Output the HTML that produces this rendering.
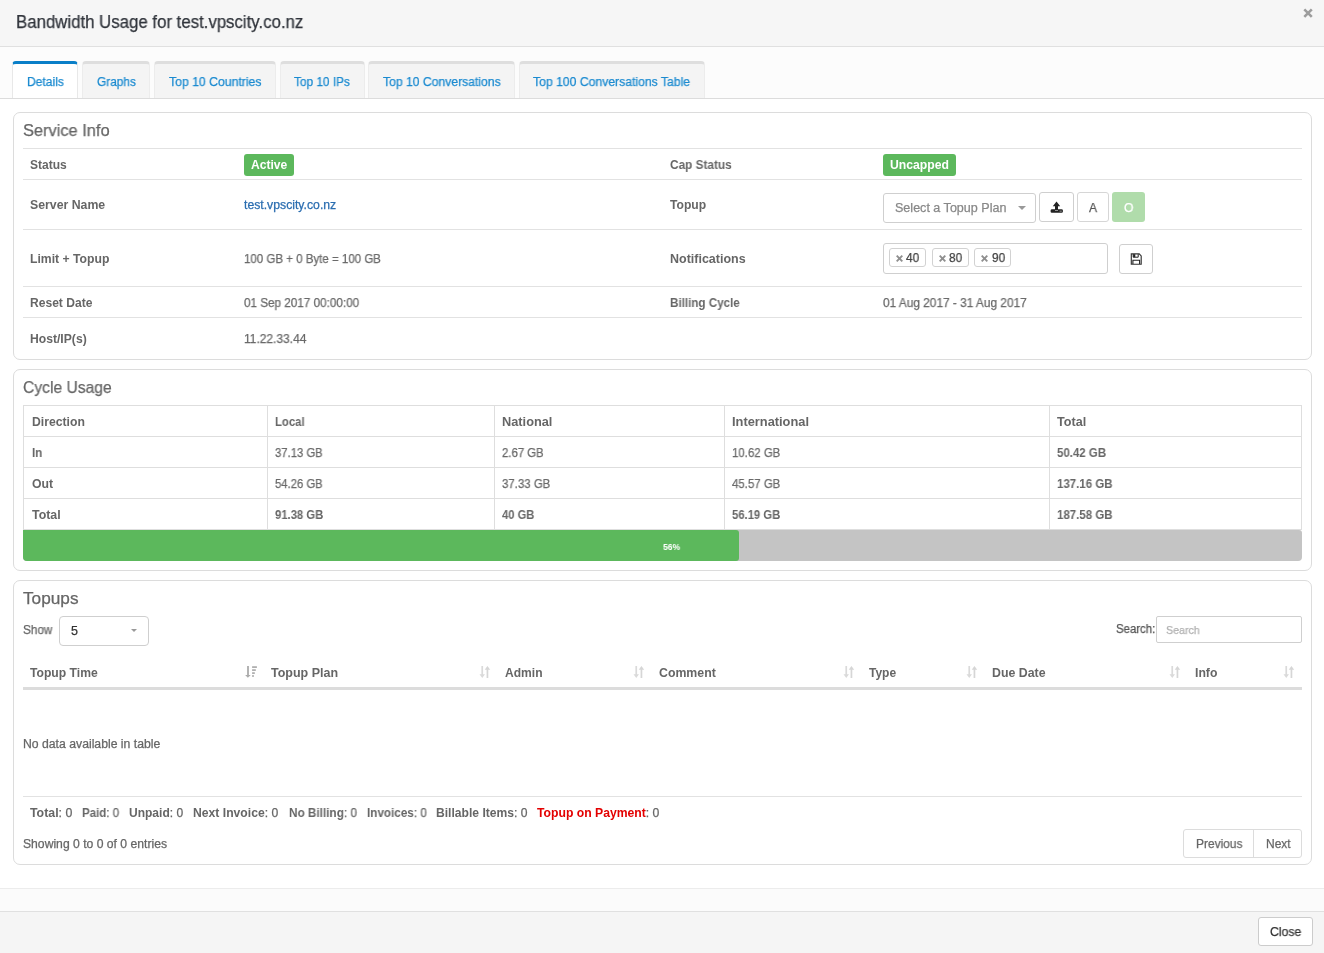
<!DOCTYPE html>
<html><head><meta charset="utf-8"><title>Bandwidth Usage</title>
<style>
html,body{margin:0;padding:0;width:1324px;height:953px;overflow:hidden;background:#fff;font-family:"Liberation Sans", sans-serif;}
body>div,body>svg{position:absolute;}
.t{white-space:nowrap;line-height:1;transform-origin:0 0;will-change:transform;}
.n{-webkit-text-stroke:0.25px currentColor;}
b{font-weight:700;-webkit-text-stroke:0;}
</style></head><body>
<div style="left:0px;top:0px;width:1324px;height:46px;background:#f6f6f6"></div>
<div style="left:0px;top:46px;width:1324px;height:1px;background:#e0e0e0"></div>
<div class="t n" style="left:15.7px;top:14.00px;font-size:17.5px;font-weight:400;color:#30343b;transform:scaleX(0.9600);">Bandwidth Usage for test.vpscity.co.nz</div>
<svg style="left:1302.1px;top:7.1px" width="12" height="12" viewBox="0 0 12 12"><path d="M2.3 2.3L9.8 9.8M9.8 2.3L2.3 9.8" stroke="#9d9d9d" stroke-width="2.6"/></svg>
<div style="left:0px;top:47px;width:1324px;height:51px;background:#fcfcfc"></div>
<div style="left:0px;top:98px;width:1324px;height:1px;background:#dcdcdc"></div>
<div style="left:12px;top:61px;width:66px;height:37px;background:#fff;border:1px solid #e8e8e8;border-bottom:none;border-top:3px solid #0a7fc8;border-radius:4px 4px 0 0;box-sizing:border-box"></div>
<div class="t n" style="left:26.6px;top:76.00px;font-size:12.5px;font-weight:400;color:#1a8ad0;transform:scaleX(0.9629);">Details</div>
<div style="left:82px;top:61px;width:68px;height:37px;background:#f4f4f4;border:1px solid #ececec;border-bottom:none;border-top:3px solid #dedede;border-radius:4px 4px 0 0;box-sizing:border-box"></div>
<div class="t n" style="left:96.7px;top:76.00px;font-size:12.5px;font-weight:400;color:#1a8ad0;transform:scaleX(0.9488);">Graphs</div>
<div style="left:154px;top:61px;width:122px;height:37px;background:#f4f4f4;border:1px solid #ececec;border-bottom:none;border-top:3px solid #dedede;border-radius:4px 4px 0 0;box-sizing:border-box"></div>
<div class="t n" style="left:168.5px;top:76.00px;font-size:12.5px;font-weight:400;color:#1a8ad0;transform:scaleX(0.9787);">Top 10 Countries</div>
<div style="left:280px;top:61px;width:85px;height:37px;background:#f4f4f4;border:1px solid #ececec;border-bottom:none;border-top:3px solid #dedede;border-radius:4px 4px 0 0;box-sizing:border-box"></div>
<div class="t n" style="left:294px;top:76.00px;font-size:12.5px;font-weight:400;color:#1a8ad0;transform:scaleX(0.9462);">Top 10 IPs</div>
<div style="left:368px;top:61px;width:147px;height:37px;background:#f4f4f4;border:1px solid #ececec;border-bottom:none;border-top:3px solid #dedede;border-radius:4px 4px 0 0;box-sizing:border-box"></div>
<div class="t n" style="left:382.6px;top:76.00px;font-size:12.5px;font-weight:400;color:#1a8ad0;transform:scaleX(0.9727);">Top 10 Conversations</div>
<div style="left:519px;top:61px;width:186px;height:37px;background:#f4f4f4;border:1px solid #ececec;border-bottom:none;border-top:3px solid #dedede;border-radius:4px 4px 0 0;box-sizing:border-box"></div>
<div class="t n" style="left:533.4px;top:76.00px;font-size:12.5px;font-weight:400;color:#1a8ad0;transform:scaleX(0.9758);">Top 100 Conversations Table</div>
<div style="left:0px;top:99px;width:1324px;height:789px;background:#fff"></div>
<div style="left:13px;top:112px;width:1299px;height:248px;border:1px solid #dcdcdc;border-radius:7px;box-sizing:border-box"></div>
<div class="t n" style="left:23.1px;top:123.00px;font-size:16.6px;font-weight:400;color:#666;transform:scaleX(0.9883);">Service Info</div>
<div style="left:23px;top:148px;width:1279px;height:1px;background:#e2e2e2"></div>
<div style="left:23px;top:179px;width:1279px;height:1px;background:#e2e2e2"></div>
<div style="left:23px;top:229px;width:1279px;height:1px;background:#e2e2e2"></div>
<div style="left:23px;top:286px;width:1279px;height:1px;background:#e2e2e2"></div>
<div style="left:23px;top:317px;width:1279px;height:1px;background:#e2e2e2"></div>
<div class="t" style="left:30px;top:159.00px;font-size:12px;font-weight:700;color:#666;transform:scaleX(1.0031);">Status</div>
<div style="left:244px;top:154px;width:50px;height:22px;background:#5cb85c;border-radius:3px"></div>
<div class="t" style="left:250.5px;top:159.00px;font-size:12px;font-weight:700;color:#fff;transform:scaleX(1.0047);">Active</div>
<div class="t" style="left:670px;top:159.00px;font-size:12px;font-weight:700;color:#666;transform:scaleX(0.9842);">Cap Status</div>
<div style="left:883px;top:154px;width:73px;height:22px;background:#5cb85c;border-radius:3px"></div>
<div class="t" style="left:889.6px;top:159.00px;font-size:12px;font-weight:700;color:#fff;transform:scaleX(1.0170);">Uncapped</div>
<div class="t" style="left:30px;top:199.00px;font-size:12px;font-weight:700;color:#666;transform:scaleX(1.0247);">Server Name</div>
<div class="t n" style="left:243.8px;top:199.00px;font-size:12px;font-weight:400;color:#2a6db0;transform:scaleX(1.0190);">test.vpscity.co.nz</div>
<div class="t" style="left:670px;top:199.00px;font-size:12px;font-weight:700;color:#666;transform:scaleX(1.0093);">Topup</div>
<div style="left:883px;top:193px;width:153px;height:30px;border:1px solid #cfcfcf;border-radius:3px;box-sizing:border-box;background:#fff"></div>
<div class="t n" style="left:894.7px;top:202.00px;font-size:12.5px;font-weight:400;color:#888;transform:scaleX(1.0039);">Select a Topup Plan</div>
<div style="left:1018px;top:206px;width:0;height:0;border-left:4px solid transparent;border-right:4px solid transparent;border-top:4px solid #999"></div>
<div style="left:1039px;top:192px;width:35px;height:30px;border:1px solid #cfcfcf;border-radius:3px;box-sizing:border-box;background:#fff"></div>
<svg style="left:1049px;top:200px" width="15" height="14" viewBox="0 0 15 14"><path d="M7.5 1.5L3.8 6.3H6V10H9V6.3H11.2Z" fill="#222"/><path d="M2.6 9.2H6V10.6H9V9.2H12.6A1.3 1.3 0 0 1 13.9 10.5V11.6A1.2 1.2 0 0 1 12.7 12.8H2.8A1.2 1.2 0 0 1 1.6 11.6V10.4A1.2 1.2 0 0 1 2.6 9.2Z" fill="#222"/><rect x="10.6" y="10.6" width="2.2" height="1.1" fill="#888"/></svg>
<div style="left:1077px;top:192px;width:32px;height:30px;border:1px solid #d6d6d6;border-radius:3px;box-sizing:border-box;background:#fff"></div>
<div class="t n" style="left:1089px;top:202.00px;font-size:12.5px;font-weight:400;color:#555;transform:scaleX(0.9588);">A</div>
<div style="left:1112px;top:192px;width:33px;height:30px;border-radius:3px;background:#b0dcab"></div>
<div class="t n" style="left:1123.8px;top:202.00px;font-size:12.5px;font-weight:400;color:#fff;transform:scaleX(0.9657);">O</div>
<div class="t" style="left:30.1px;top:253.00px;font-size:12px;font-weight:700;color:#666;transform:scaleX(1.0165);">Limit + Topup</div>
<div class="t n" style="left:244.4px;top:253.00px;font-size:12.2px;font-weight:400;color:#6a6a6a;transform:scaleX(0.9441);">100 GB + 0 Byte = 100 GB</div>
<div class="t" style="left:669.9px;top:253.00px;font-size:12px;font-weight:700;color:#666;transform:scaleX(1.0403);">Notifications</div>
<div style="left:883px;top:243px;width:225px;height:31px;border:1px solid #cfcfcf;border-radius:3px;box-sizing:border-box;background:#fff"></div>
<div style="left:889px;top:248px;width:37px;height:19px;border:1px solid #d2d2d2;border-radius:3px;box-sizing:border-box;background:#fff"></div>
<svg style="left:895.5px;top:255px" width="7" height="7" viewBox="0 0 7 7"><path d="M0.7 0.7L6.3 6.3M6.3 0.7L0.7 6.3" stroke="#8f8f8f" stroke-width="1.9"/></svg>
<div class="t n" style="left:906.2px;top:252.00px;font-size:12px;font-weight:400;color:#444;transform:scaleX(0.9806);">40</div>
<div style="left:932px;top:248px;width:37px;height:19px;border:1px solid #d2d2d2;border-radius:3px;box-sizing:border-box;background:#fff"></div>
<svg style="left:938.5px;top:255px" width="7" height="7" viewBox="0 0 7 7"><path d="M0.7 0.7L6.3 6.3M6.3 0.7L0.7 6.3" stroke="#8f8f8f" stroke-width="1.9"/></svg>
<div class="t n" style="left:949.2px;top:252.00px;font-size:12px;font-weight:400;color:#444;transform:scaleX(0.9806);">80</div>
<div style="left:974.3px;top:248px;width:37px;height:19px;border:1px solid #d2d2d2;border-radius:3px;box-sizing:border-box;background:#fff"></div>
<svg style="left:980.8px;top:255px" width="7" height="7" viewBox="0 0 7 7"><path d="M0.7 0.7L6.3 6.3M6.3 0.7L0.7 6.3" stroke="#8f8f8f" stroke-width="1.9"/></svg>
<div class="t n" style="left:991.5px;top:252.00px;font-size:12px;font-weight:400;color:#444;transform:scaleX(0.9806);">90</div>
<div style="left:1119px;top:244px;width:34px;height:30px;border:1px solid #cfcfcf;border-radius:3px;box-sizing:border-box;background:#fff"></div>
<svg style="left:1130px;top:252.5px" width="12" height="12" viewBox="0 0 12 12"><path d="M1.3 0.9H9.2L11.2 2.9V11.2H1.3Z" fill="none" stroke="#333" stroke-width="1.15"/><path d="M3.2 1.2V4.2H8.2V1.2" fill="none" stroke="#222" stroke-width="1"/><rect x="3.3" y="1.2" width="2" height="3" fill="#222"/><path d="M2.9 10.9V7.3H9.6V10.9" fill="none" stroke="#222" stroke-width="1.1"/></svg>
<div class="t" style="left:30.1px;top:297.00px;font-size:12px;font-weight:700;color:#666;transform:scaleX(1.0059);">Reset Date</div>
<div class="t n" style="left:243.9px;top:297.00px;font-size:12.2px;font-weight:400;color:#6a6a6a;transform:scaleX(0.9595);">01 Sep 2017 00:00:00</div>
<div class="t" style="left:670px;top:297.00px;font-size:12px;font-weight:700;color:#666;transform:scaleX(0.9690);">Billing Cycle</div>
<div class="t n" style="left:883px;top:297.00px;font-size:12.2px;font-weight:400;color:#6a6a6a;transform:scaleX(0.9726);">01 Aug 2017 - 31 Aug 2017</div>
<div class="t" style="left:30.1px;top:333.00px;font-size:12px;font-weight:700;color:#666;transform:scaleX(1.0122);">Host/IP(s)</div>
<div class="t n" style="left:244.4px;top:333.00px;font-size:12.2px;font-weight:400;color:#6a6a6a;transform:scaleX(0.9829);">11.22.33.44</div>
<div style="left:13px;top:369px;width:1299px;height:202px;border:1px solid #dcdcdc;border-radius:7px;box-sizing:border-box"></div>
<div class="t n" style="left:23.3px;top:379.00px;font-size:16.2px;font-weight:400;color:#666;transform:scaleX(0.9664);">Cycle Usage</div>
<div style="left:23px;top:405px;width:1279px;height:125px;border:1px solid #dedede;box-sizing:border-box"></div>
<div style="left:23px;top:436px;width:1279px;height:1px;background:#dedede"></div>
<div style="left:23px;top:467px;width:1279px;height:1px;background:#dedede"></div>
<div style="left:23px;top:498px;width:1279px;height:1px;background:#dedede"></div>
<div style="left:267px;top:405px;width:1px;height:125px;background:#dedede"></div>
<div style="left:494px;top:405px;width:1px;height:125px;background:#dedede"></div>
<div style="left:724px;top:405px;width:1px;height:125px;background:#dedede"></div>
<div style="left:1049px;top:405px;width:1px;height:125px;background:#dedede"></div>
<div class="t" style="left:31.5px;top:416.00px;font-size:12px;font-weight:700;color:#666;transform:scaleX(1.0170);">Direction</div>
<div class="t" style="left:275.3px;top:416.00px;font-size:12px;font-weight:700;color:#666;transform:scaleX(0.9444);">Local</div>
<div class="t" style="left:502.1px;top:416.00px;font-size:12px;font-weight:700;color:#666;transform:scaleX(1.0646);">National</div>
<div class="t" style="left:732.3px;top:416.00px;font-size:12px;font-weight:700;color:#666;transform:scaleX(1.0692);">International</div>
<div class="t" style="left:1056.9px;top:416.00px;font-size:12px;font-weight:700;color:#666;transform:scaleX(1.0511);">Total</div>
<div class="t" style="left:31.5px;top:447.00px;font-size:12px;font-weight:700;color:#666;transform:scaleX(0.9652);">In</div>
<div class="t n" style="left:275.3px;top:447.00px;font-size:12.2px;font-weight:400;color:#6a6a6a;transform:scaleX(0.9262);">37.13 GB</div>
<div class="t n" style="left:502.1px;top:447.00px;font-size:12.2px;font-weight:400;color:#6a6a6a;transform:scaleX(0.9325);">2.67 GB</div>
<div class="t n" style="left:732.3px;top:447.00px;font-size:12.2px;font-weight:400;color:#6a6a6a;transform:scaleX(0.9379);">10.62 GB</div>
<div class="t" style="left:1056.9px;top:447.00px;font-size:12px;font-weight:700;color:#666;transform:scaleX(0.9557);">50.42 GB</div>
<div class="t" style="left:31.5px;top:478.00px;font-size:12px;font-weight:700;color:#666;transform:scaleX(1.0207);">Out</div>
<div class="t n" style="left:275.3px;top:478.00px;font-size:12.2px;font-weight:400;color:#6a6a6a;transform:scaleX(0.9262);">54.26 GB</div>
<div class="t n" style="left:502.1px;top:478.00px;font-size:12.2px;font-weight:400;color:#6a6a6a;transform:scaleX(0.9379);">37.33 GB</div>
<div class="t n" style="left:732.3px;top:478.00px;font-size:12.2px;font-weight:400;color:#6a6a6a;transform:scaleX(0.9379);">45.57 GB</div>
<div class="t" style="left:1056.9px;top:478.00px;font-size:12px;font-weight:700;color:#666;transform:scaleX(0.9578);">137.16 GB</div>
<div class="t" style="left:31.5px;top:509.00px;font-size:12px;font-weight:700;color:#666;transform:scaleX(1.0331);">Total</div>
<div class="t" style="left:275.3px;top:509.00px;font-size:12px;font-weight:700;color:#666;transform:scaleX(0.9401);">91.38 GB</div>
<div class="t" style="left:502.1px;top:509.00px;font-size:12px;font-weight:700;color:#666;transform:scaleX(0.9312);">40 GB</div>
<div class="t" style="left:732.3px;top:509.00px;font-size:12px;font-weight:700;color:#666;transform:scaleX(0.9401);">56.19 GB</div>
<div class="t" style="left:1056.9px;top:509.00px;font-size:12px;font-weight:700;color:#666;transform:scaleX(0.9578);">187.58 GB</div>
<div style="left:23px;top:530px;width:1279px;height:31px;background:#c4c4c4;border-radius:0 3px 4px 4px"></div>
<div style="left:23px;top:530px;width:716px;height:31px;background:#5cb85c;border-radius:0 3px 3px 4px"></div>
<div class="t" style="left:662.7px;top:542.00px;font-size:9.5px;font-weight:700;color:#fff;transform:scaleX(0.9045);">56%</div>
<div style="left:13px;top:580px;width:1299px;height:285px;border:1px solid #dcdcdc;border-radius:7px;box-sizing:border-box"></div>
<div class="t n" style="left:23px;top:590.00px;font-size:17px;font-weight:400;color:#666;transform:scaleX(1.0123);">Topups</div>
<div class="t n" style="left:23px;top:624.00px;font-size:12px;font-weight:400;color:#666;transform:scaleX(0.9790);">Show</div>
<div style="left:59px;top:616px;width:90px;height:30px;border:1px solid #cfcfcf;border-radius:4px;box-sizing:border-box;background:#fff"></div>
<div class="t n" style="left:70.6px;top:625.00px;font-size:12.5px;font-weight:400;color:#333;">5</div>
<div style="left:131px;top:629px;width:0;height:0;border-left:3.5px solid transparent;border-right:3.5px solid transparent;border-top:3.5px solid #999"></div>
<div class="t n" style="left:1116.2px;top:623.00px;font-size:12px;font-weight:400;color:#555;transform:scaleX(0.9502);">Search:</div>
<div style="left:1156px;top:616px;width:146px;height:27px;border:1px solid #cfcfcf;border-radius:2px;box-sizing:border-box;background:#fff"></div>
<div class="t n" style="left:1166px;top:625.00px;font-size:11.5px;font-weight:400;color:#b0b0b0;transform:scaleX(0.9276);">Search</div>
<div class="t" style="left:30px;top:667.00px;font-size:12px;font-weight:700;color:#666;transform:scaleX(1.0121);">Topup Time</div>
<svg style="left:245px;top:666px" width="14" height="14" viewBox="0 0 14 14"><rect x="2.1" y="0" width="1.8" height="9.2" fill="#ababab"/><path d="M0.1 9H5.7L2.9 11.8Z" fill="#ababab"/><rect x="7.1" y="0.2" width="4.8" height="1.8" fill="#b0b0b0"/><rect x="7.1" y="3.2" width="3.7" height="1.8" fill="#b0b0b0"/><rect x="7.1" y="6.2" width="2.7" height="1.8" fill="#b0b0b0"/><rect x="7.1" y="9.1" width="1.8" height="1.8" fill="#b0b0b0"/></svg>
<div class="t" style="left:270.5px;top:667.00px;font-size:12px;font-weight:700;color:#666;transform:scaleX(1.0398);">Topup Plan</div>
<svg style="left:479.2px;top:666px" width="12" height="12" viewBox="0 0 12 12"><path d="M2.4 0H4.1V8.2H6L3.25 12L0.5 8.2H2.4Z" fill="#dadada"/><path d="M7.6 12H9.3V3.8H11.2L8.45 0L5.7 3.8H7.6Z" fill="#d6d6d6"/></svg>
<div class="t" style="left:504.8px;top:667.00px;font-size:12px;font-weight:700;color:#666;transform:scaleX(1.0042);">Admin</div>
<svg style="left:633.2px;top:666px" width="12" height="12" viewBox="0 0 12 12"><path d="M2.4 0H4.1V8.2H6L3.25 12L0.5 8.2H2.4Z" fill="#dadada"/><path d="M7.6 12H9.3V3.8H11.2L8.45 0L5.7 3.8H7.6Z" fill="#d6d6d6"/></svg>
<div class="t" style="left:658.9px;top:667.00px;font-size:12px;font-weight:700;color:#666;transform:scaleX(1.0263);">Comment</div>
<svg style="left:843.2px;top:666px" width="12" height="12" viewBox="0 0 12 12"><path d="M2.4 0H4.1V8.2H6L3.25 12L0.5 8.2H2.4Z" fill="#dadada"/><path d="M7.6 12H9.3V3.8H11.2L8.45 0L5.7 3.8H7.6Z" fill="#d6d6d6"/></svg>
<div class="t" style="left:869.1px;top:667.00px;font-size:12px;font-weight:700;color:#666;transform:scaleX(0.9991);">Type</div>
<svg style="left:966.1px;top:666px" width="12" height="12" viewBox="0 0 12 12"><path d="M2.4 0H4.1V8.2H6L3.25 12L0.5 8.2H2.4Z" fill="#dadada"/><path d="M7.6 12H9.3V3.8H11.2L8.45 0L5.7 3.8H7.6Z" fill="#d6d6d6"/></svg>
<div class="t" style="left:992px;top:667.00px;font-size:12px;font-weight:700;color:#666;transform:scaleX(1.0285);">Due Date</div>
<svg style="left:1169.2px;top:666px" width="12" height="12" viewBox="0 0 12 12"><path d="M2.4 0H4.1V8.2H6L3.25 12L0.5 8.2H2.4Z" fill="#dadada"/><path d="M7.6 12H9.3V3.8H11.2L8.45 0L5.7 3.8H7.6Z" fill="#d6d6d6"/></svg>
<div class="t" style="left:1195.1px;top:667.00px;font-size:12px;font-weight:700;color:#666;transform:scaleX(1.0182);">Info</div>
<svg style="left:1283.1px;top:666px" width="12" height="12" viewBox="0 0 12 12"><path d="M2.4 0H4.1V8.2H6L3.25 12L0.5 8.2H2.4Z" fill="#dadada"/><path d="M7.6 12H9.3V3.8H11.2L8.45 0L5.7 3.8H7.6Z" fill="#d6d6d6"/></svg>
<div style="left:23px;top:687px;width:1279px;height:3px;background:#dcdcdc"></div>
<div class="t n" style="left:23px;top:738.00px;font-size:12px;font-weight:400;color:#666;transform:scaleX(1.0188);">No data available in table</div>
<div style="left:23px;top:796px;width:1279px;height:1px;background:#e2e2e2"></div>
<div class="t n" style="left:30px;top:807.00px;font-size:12px;font-weight:400;color:#666;transform:scaleX(1.0286);"><b style="color:#666">Total</b>: 0</div>
<div class="t n" style="left:81.8px;top:807.00px;font-size:12px;font-weight:400;color:#666;transform:scaleX(0.9590);"><b style="color:#666">Paid</b>: 0</div>
<div class="t n" style="left:129.1px;top:807.00px;font-size:12px;font-weight:400;color:#666;transform:scaleX(1.0016);"><b style="color:#666">Unpaid</b>: 0</div>
<div class="t n" style="left:193.2px;top:807.00px;font-size:12px;font-weight:400;color:#666;transform:scaleX(1.0137);"><b style="color:#666">Next Invoice</b>: 0</div>
<div class="t n" style="left:288.5px;top:807.00px;font-size:12px;font-weight:400;color:#666;transform:scaleX(0.9792);"><b style="color:#666">No Billing</b>: 0</div>
<div class="t n" style="left:366.7px;top:807.00px;font-size:12px;font-weight:400;color:#666;transform:scaleX(0.9743);"><b style="color:#666">Invoices</b>: 0</div>
<div class="t n" style="left:436.2px;top:807.00px;font-size:12px;font-weight:400;color:#666;transform:scaleX(1.0086);"><b style="color:#666">Billable Items</b>: 0</div>
<div class="t n" style="left:537.4px;top:807.00px;font-size:12px;font-weight:400;color:#666;transform:scaleX(1.0162);"><b style="color:#e30000">Topup on Payment</b>: 0</div>
<div class="t n" style="left:23px;top:838.00px;font-size:12px;font-weight:400;color:#666;transform:scaleX(1.0134);">Showing 0 to 0 of 0 entries</div>
<div style="left:1183px;top:829px;width:119px;height:29px;border:1px solid #dcdcdc;border-radius:3px;box-sizing:border-box;background:#fff"></div>
<div style="left:1253px;top:830px;width:1px;height:27px;background:#dcdcdc"></div>
<div class="t n" style="left:1195.5px;top:838.00px;font-size:12px;font-weight:400;color:#666;transform:scaleX(0.9938);">Previous</div>
<div class="t n" style="left:1265.5px;top:838.00px;font-size:12px;font-weight:400;color:#666;transform:scaleX(0.9965);">Next</div>
<div style="left:0px;top:888px;width:1324px;height:1px;background:#ececec"></div>
<div style="left:0px;top:889px;width:1324px;height:22px;background:#fbfbfb"></div>
<div style="left:0px;top:911px;width:1324px;height:1px;background:#e0e0e0"></div>
<div style="left:0px;top:912px;width:1324px;height:41px;background:#f5f5f5"></div>
<div style="left:1258px;top:917px;width:55px;height:29px;border:1px solid #cccccc;border-radius:3px;box-sizing:border-box;background:#fff"></div>
<div class="t n" style="left:1269.7px;top:926.00px;font-size:12.5px;font-weight:400;color:#333;transform:scaleX(0.9791);">Close</div>
</body></html>
